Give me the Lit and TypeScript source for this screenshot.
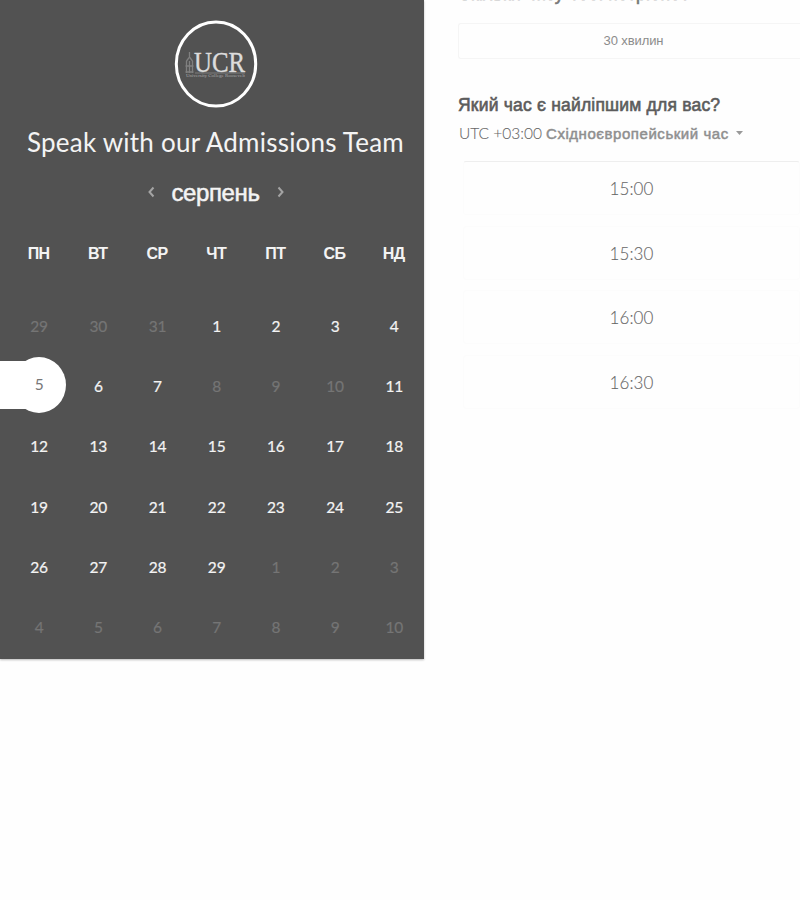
import { LitElement, html, css } from "lit";
import { customElement } from "lit/decorators.js";
import { classMap } from "lit/directives/class-map.js";

const WEEKDAYS = ["ПН", "ВТ", "СР", "ЧТ", "ПТ", "СБ", "НД"];
const SELECTED = 7;
const DISABLED = new Set([0, 1, 2, 10, 11, 12]);
const DAYS = Array.from({ length: 42 }, (_, i) => {
  const label = i < 3 ? 29 + i : i < 32 ? i - 2 : i - 31;
  return { label, off: DISABLED.has(i) || i >= 32, selected: i === SELECTED };
});

@customElement("school-logo")
class SchoolLogo extends LitElement {
  static styles = css`
    :host { display: block; width: 84px; height: 88px; }
    svg { display: block; }
    .name { font-family: "Liberation Serif", serif; font-size: 29px; fill: #dcdcdc; stroke: #dcdcdc; stroke-width: .4; }
    .tag { font-family: "Liberation Serif", serif; font-size: 5px; fill: #a8a8a8; }
  `;
  render() {
    return html`<svg width="84" height="88" viewBox="0 0 84 88">
      <ellipse cx="42" cy="44" rx="39.7" ry="42" fill="none" stroke="#fff" stroke-width="3"/>
      <g stroke="#808080" fill="none" stroke-width="1.3">
        <path d="M15.500 32v6M12.500 41l3-4 3 4M12.500 41v12M15.500 41v12M18.500 41v12M11.500 46h8M11.500 52h8"/>
      </g>
      <text class="name" x="20" y="51.500" textLength="51" lengthAdjust="spacingAndGlyphs">UCR</text>
      <path d="M21 53h50" stroke="#888" stroke-width=".8"/>
      <text class="tag" x="12" y="57" textLength="59" lengthAdjust="spacingAndGlyphs">University College Roosevelt</text>
    </svg>`;
  }
}

@customElement("booking-calendar")
class BookingCalendar extends LitElement {
  static styles = css`
    :host {
      display: flex; flex-direction: column; align-items: center;
      box-sizing: border-box; width: 424px; height: 659px; padding: 20px 0 0 9px;
      background: #525252; color: #f4f4f4; box-shadow: 0 1px 2px #bbb;
      font-family: Lato, "Liberation Sans", sans-serif; overflow: hidden;
    }
    school-logo { margin-right: 2px; }
    h1 { margin: 18px 2px 0 0; font-size: 26px; line-height: 32px; font-weight: 400; white-space: nowrap; letter-spacing: .22px; }
    .month { display: flex; align-items: center; gap: 17px; height: 32px; margin: 19px 2px 0 0; }
    .month span { font: 24px/32px "Liberation Sans", sans-serif; -webkit-text-stroke: .5px #f4f4f4; letter-spacing: -.4px; }
    .month svg { display: block; margin-top: -3px; }
    .grid { display: grid; grid-template-columns: repeat(7, 59.2px); align-self: flex-start; }
    .week { margin-top: 29px; height: 32px; }
    .week div { font: bold 16px/32px "Liberation Sans", sans-serif; letter-spacing: -.6px; text-align: center; }
    .days { grid-auto-rows: 60.2px; margin-top: 26px; }
    .day { display: flex; align-items: center; justify-content: center; font-size: 15.500px; letter-spacing: -.2px; padding-left: 1px; -webkit-text-stroke: .2px currentColor; }
    .off { color: #757575; }
    .selected { position: relative; color: #777; -webkit-text-stroke: 0; }
    .selected::before, .selected::after { content: ""; position: absolute; background: #fff; }
    .selected::before { width: 54px; height: 56px; border-radius: 50%; left: 3px; top: 1px; }
    .selected::after { left: -10px; width: 32px; top: 5px; height: 48px; }
    .selected span { position: relative; z-index: 1; top: -2px; }
  `;
  render() {
    return html`
      <school-logo></school-logo>
      <h1>Speak with our Admissions Team</h1>
      <div class="month">
        <svg width="8" height="12" viewBox="0 0 8 12"><path d="M6.500 1.500L2.500 6l4 4.500" fill="none" stroke="#a4a4a4" stroke-width="2"/></svg>
        <span>серпень</span>
        <svg width="8" height="12" viewBox="0 0 8 12"><path d="M1.500 1.500L5.500 6l-4 4.500" fill="none" stroke="#a4a4a4" stroke-width="2"/></svg>
      </div>
      <div class="grid week">${WEEKDAYS.map((d) => html`<div>${d}</div>`)}</div>
      <div class="grid days">${DAYS.map((d) => html`
        <div class=${classMap({ day: true, off: d.off, selected: d.selected })}><span>${d.label}</span></div>`)}</div>`;
  }
}

@customElement("time-picker")
class TimePicker extends LitElement {
  static styles = css`
    :host { display: block; flex: 1; min-width: 0; padding-left: 34px; font-family: "Liberation Sans", sans-serif; color: #5c5c5c; }
    h2 { margin: 0; font-size: 17.500px; line-height: 22px; font-weight: 400; white-space: nowrap; letter-spacing: .2px; -webkit-text-stroke: .6px currentColor; }
    .first { margin-top: -17px; color: #777; letter-spacing: .3px; }
    .duration { box-sizing: border-box; margin-top: 18px; height: 36px; border: 1px solid #f5f5f5; border-right: 0; border-radius: 3px 0 0 3px;
      padding-left: 8px; background: #fefefe; color: #8c8c8c; font-size: 13px; line-height: 33px; text-align: center; letter-spacing: -.1px; }
    .second { margin-top: 35px; }
    .zone { display: flex; align-items: center; margin: 6px 0 0 1px; height: 22px; color: #8f8f8f; white-space: nowrap; }
    .utc { font: 300 15.500px Lato, sans-serif; color: #666; width: 87px; -webkit-text-stroke: .1px #666; }
    .zone b { font-size: 15px; font-weight: 400; width: 183px; letter-spacing: .55px; -webkit-text-stroke: .5px currentColor; }
    .zone svg { margin-left: 7px; }
    .slots { margin: 17px 0 0 5px; display: grid; grid-auto-rows: 54px; gap: 10.700px; }
    .slot { box-sizing: border-box; border: 1px solid #fcfcfc; border-radius: 3px; text-align: center;
      font: 300 17px/54px Lato, sans-serif; letter-spacing: .1px; color: #666; -webkit-text-stroke: .1px #666; }
    .slot:first-child { border-top-color: #eee; }
  `;
  render() {
    return html`
      <h2 class="first">Скільки часу Тобі потрібно?</h2>
      <div class="duration">30 хвилин</div>
      <h2 class="second">Який час є найліпшим для вас?</h2>
      <div class="zone"><span class="utc">UTC +03:00</span><b>Східноєвропейський час</b>
        <svg width="7" height="4" viewBox="0 0 7 4"><path d="M0 0h7L3.500 4z" fill="#999"/></svg></div>
      <div class="slots">${["15:00", "15:30", "16:00", "16:30"].map((t) => html`<div class="slot">${t}</div>`)}</div>`;
  }
}

@customElement("app-root")
class AppRoot extends LitElement {
  static styles = css`
    :host { display: flex; align-items: flex-start; width: 800px; height: 900px; background: #fefefe; overflow: hidden; }
  `;
  render() {
    return html`<booking-calendar></booking-calendar><time-picker></time-picker>`;
  }
}
